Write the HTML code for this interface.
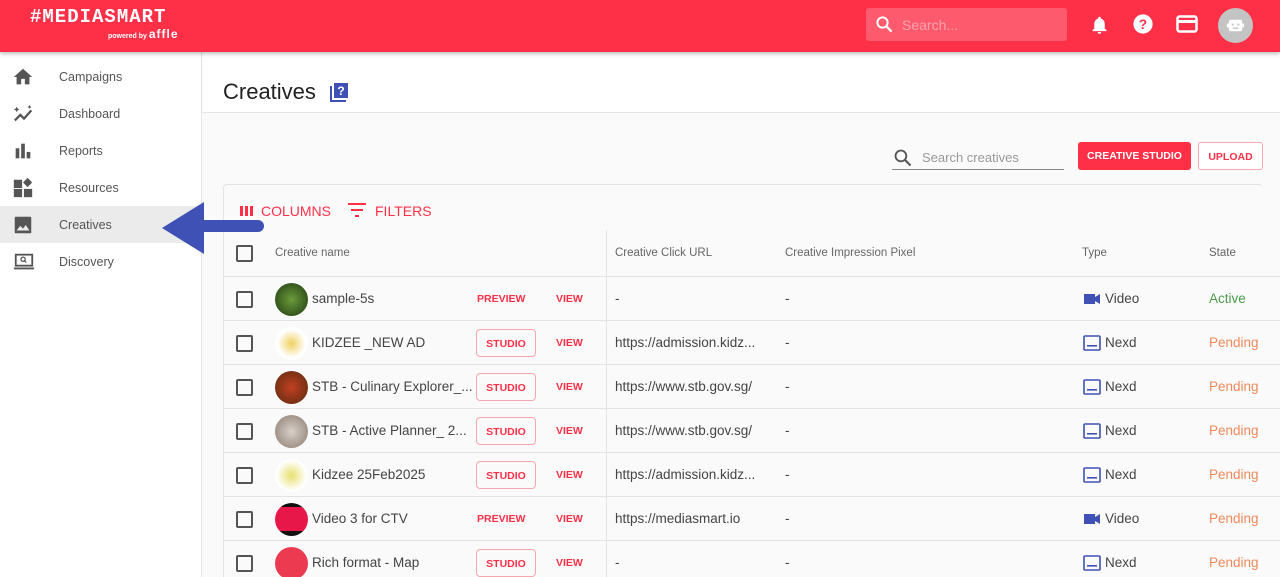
<!DOCTYPE html>
<html><head><style>
*{box-sizing:border-box;margin:0;padding:0}
html,body{width:1280px;height:577px;overflow:hidden}
body{font-family:"Liberation Sans",sans-serif;background:#fafafa;position:relative;color:#333}
.hdr{position:absolute;left:0;top:0;width:1280px;height:52px;background:#fe3048;box-shadow:0 2px 4px rgba(0,0,0,.25);z-index:5}
.logo{position:absolute;left:30px;top:6px;color:#fff;font-weight:bold;font-size:19px;letter-spacing:1px;font-family:"Liberation Mono",monospace}
.pw{position:absolute;left:108px;top:27px;color:#fff;font-size:7px;font-weight:bold}
.pw b{font-size:12px;letter-spacing:1px;font-weight:bold}
.srch{position:absolute;left:866px;top:8px;width:201px;height:33px;background:#fe5a6d;border-radius:3px;color:#ffa3ae;font-size:14px;padding:9px 0 0 36px}
.side{position:absolute;left:0;top:52px;width:202px;height:525px;background:#fff;border-right:1px solid #e3e3e3}
.item{position:absolute;left:0;width:202px;height:37px;font-size:12.5px;color:#555;padding:12px 0 0 59px}
.item svg{position:absolute;left:12px;top:8px}
.main{position:absolute;left:203px;top:52px;width:1077px;height:61px;background:#fff;border-bottom:1px solid #e3e3e3}
.card{position:absolute;left:223px;top:184px;width:1040px;height:400px;border:1px solid #e3e3e3;border-right:none;border-radius:4px;background:#fafafa}
.row{position:absolute;left:224px;width:1056px;height:44px;border-bottom:1px solid #e3e3e3;font-size:13.5px;color:#444}
.cb{position:absolute;left:12px;top:14px;width:17px;height:17px;border:2px solid #555;border-radius:2px}
.t{position:absolute;top:14px;white-space:nowrap}
.av{position:absolute;left:51px;top:6px;width:33px;height:33px;border-radius:50%}
.btn{position:absolute;top:8px;left:252px;width:60px;height:28px;border:1px solid #f7a6b0;border-radius:4px;color:#fe3048;font-size:10.5px;text-align:center;padding-top:8px;font-weight:bold}
.lk{position:absolute;top:16px;color:#fe3048;font-size:10.5px;font-weight:bold}
</style></head><body>
<div class="hdr">
<div class="logo">#MEDIASMART</div>
<div class="pw">powered by <b>affle</b></div>
<div class="srch">Search...<svg style="position:absolute;left:9px;top:7px" width="19" height="19" viewBox="0 0 24 24"><circle cx="9.5" cy="9.5" r="6.5" fill="none" stroke="#fff" stroke-width="2.5"/><path d="M14 14l7 7" stroke="#fff" stroke-width="2.8"/></svg></div>
<svg style="position:absolute;left:1089px;top:14px" width="21" height="22" viewBox="0 0 24 24"><path d="M12 22a2 2 0 002-2h-4a2 2 0 002 2zm6-6V11c0-3-1.6-5.6-4.5-6.3V4a1.5 1.5 0 00-3 0v.7C7.6 5.4 6 8 6 11v5l-2 2v1h16v-1z" fill="#fff"/></svg>
<svg style="position:absolute;left:1132px;top:13px" width="22" height="22" viewBox="0 0 24 24"><circle cx="12" cy="12" r="10.5" fill="#fff"/><text x="12" y="17.5" font-size="15" font-weight="bold" text-anchor="middle" fill="#fe3048" font-family="Liberation Sans">?</text></svg>
<svg style="position:absolute;left:1176px;top:14px" width="22" height="20" viewBox="0 0 22 20"><rect x="1.5" y="2.5" width="19" height="15" rx="2" fill="none" stroke="#fff" stroke-width="2.5"/><rect x="2" y="6" width="18" height="3" fill="#fff"/></svg>
<div style="position:absolute;left:1218px;top:8px;width:35px;height:35px;border-radius:50%;background:#c4c4c4"><svg style="position:absolute;left:8px;top:8px" width="19" height="19" viewBox="0 0 20 20"><rect x="3" y="4" width="14" height="12" rx="2" fill="#fff"/><rect x="1" y="8" width="2" height="4" fill="#fff"/><rect x="17" y="8" width="2" height="4" fill="#fff"/><rect x="6" y="8" width="2" height="2" fill="#c4c4c4"/><rect x="12" y="8" width="2" height="2" fill="#c4c4c4"/><rect x="7" y="12" width="6" height="1.5" fill="#c4c4c4"/></svg></div>
</div>
<div class="side">
<div class="item" style="top:6px"><svg width="22" height="22" viewBox="0 0 24 24"><path d="M10 20v-6h4v6h5v-8h3L12 3 2 12h3v8z" fill="#555"/></svg>Campaigns</div>
<div class="item" style="top:43px"><svg width="24" height="22" viewBox="0 0 24 24"><path d="M2 19l6-6 4 4 8-9" fill="none" stroke="#555" stroke-width="2.5"/><path d="M4 4l1 2 2 1-2 1-1 2-1-2-2-1 2-1zM18 2l.8 1.5 1.5.8-1.5.7L18 6.5l-.7-1.5-1.5-.7 1.5-.8z" fill="#555"/></svg>Dashboard</div>
<div class="item" style="top:80px"><svg width="22" height="22" viewBox="0 0 24 24"><rect x="4" y="9" width="4" height="11" fill="#555"/><rect x="10" y="4" width="4" height="16" fill="#555"/><rect x="16" y="13" width="4" height="7" fill="#555"/></svg>Reports</div>
<div class="item" style="top:117px"><svg width="22" height="22" viewBox="0 0 24 24"><rect x="2" y="3" width="9" height="9" fill="#555"/><rect x="2" y="13" width="9" height="9" fill="#555"/><rect x="13" y="13" width="9" height="9" fill="#555"/><path d="M17 1l5 5-5 5-5-5z" fill="#555"/></svg>Resources</div>
<div class="item" style="top:154px;background:#ebebeb"><svg width="22" height="22" viewBox="0 0 24 24"><rect x="3" y="3" width="18" height="18" rx="1" fill="#555"/><path d="M5 18l4-5 3 3 3-4 4 6z" fill="#ebebeb"/></svg>Creatives</div>
<div class="item" style="top:191px"><svg width="24" height="22" viewBox="0 0 24 24"><rect x="3" y="4" width="18" height="12" fill="none" stroke="#555" stroke-width="2"/><path d="M1 18h22v2H1z" fill="#555"/><circle cx="11" cy="9" r="2.3" fill="none" stroke="#555" stroke-width="1.4"/><path d="M12.5 10.5l2 2" stroke="#555" stroke-width="1.4"/></svg>Discovery</div>
</div>
<div class="main"><div style="position:absolute;left:20px;top:27px;font-size:22px;color:#222">Creatives</div>
<svg style="position:absolute;left:126px;top:30px" width="20" height="21" viewBox="0 0 20 21"><path d="M2 4v15h15" fill="none" stroke="#3f51b5" stroke-width="2"/><rect x="5" y="1" width="14" height="15" fill="#3f51b5"/><text x="12" y="13" font-size="12" font-weight="bold" fill="#fff" text-anchor="middle" font-family="Liberation Sans">?</text></svg></div>
<svg style="position:absolute;left:893px;top:148px" width="20" height="20" viewBox="0 0 24 24"><circle cx="9.5" cy="9.5" r="6.5" fill="none" stroke="#555" stroke-width="2.2"/><path d="M14 14l7 7" stroke="#555" stroke-width="2.5"/></svg>
<div style="position:absolute;left:922px;top:150px;font-size:13px;color:#999">Search creatives</div>
<div style="position:absolute;left:892px;top:169px;width:172px;height:1px;background:#888"></div>
<div style="position:absolute;left:1078px;top:142px;width:113px;height:28px;background:#fe3048;border-radius:3px;color:#fff;font-size:10.5px;font-weight:bold;text-align:center;padding-top:8px">CREATIVE STUDIO</div>
<div style="position:absolute;left:1198px;top:142px;width:65px;height:28px;border:1px solid #f7a6b0;border-radius:3px;color:#fe3048;font-size:10.5px;font-weight:bold;text-align:center;padding-top:8px;background:#fff">UPLOAD</div>
<div class="card"></div>
<svg style="position:absolute;left:240px;top:206px" width="13" height="10" viewBox="0 0 13 10"><rect x="0" y="0" width="3" height="10" fill="#fe3048"/><rect x="5" y="0" width="3" height="10" fill="#fe3048"/><rect x="10" y="0" width="3" height="10" fill="#fe3048"/></svg>
<div style="position:absolute;left:261px;top:203px;font-size:14px;color:#fe3048">COLUMNS</div>
<svg style="position:absolute;left:347px;top:202px" width="20" height="16" viewBox="0 0 20 16"><path d="M1 2h18M4 8h12M8 14h4" stroke="#fe3048" stroke-width="2"/></svg>
<div style="position:absolute;left:375px;top:203px;font-size:14px;color:#fe3048">FILTERS</div>
<div style="position:absolute;left:606px;top:230px;width:1px;height:347px;background:#e3e3e3"></div>
<div class="row" style="top:231px;height:46px;color:#666;font-size:11.5px"><div class="cb"></div><div class="t" style="left:51px;top:16px">Creative name</div><div class="t" style="left:391px;top:16px">Creative Click URL</div><div class="t" style="left:561px;top:16px">Creative Impression Pixel</div><div class="t" style="left:858px;top:16px">Type</div><div class="t" style="left:985px;top:16px">State</div></div>

<div class="row" style="top:277px"><div class="cb"></div><div class="av" style="background:radial-gradient(#6a9a3a,#1f3a12)"></div><div class="t" style="left:88px">sample-5s</div><div class="lk" style="left:253px">PREVIEW</div><div class="lk" style="left:332px">VIEW</div><div class="t" style="left:391px">-</div><div class="t" style="left:561px">-</div><svg style="position:absolute;left:860px;top:16px" width="16" height="12" viewBox="0 0 16 12"><rect x="0" y="1" width="11" height="10" fill="#3f51b5"/><path d="M11 4l5-3v10l-5-3z" fill="#3f51b5"/></svg><div class="t" style="left:881px">Video</div><div class="t" style="left:985px;color:#4c9a4c">Active</div></div>

<div class="row" style="top:321px"><div class="cb"></div><div class="av" style="background:radial-gradient(#f0d060,#fff 60%)"></div><div class="t" style="left:88px">KIDZEE _NEW AD</div><div class="btn">STUDIO</div><div class="lk" style="left:332px">VIEW</div><div class="t" style="left:391px">https://admission.kidz...</div><div class="t" style="left:561px">-</div><svg style="position:absolute;left:859px;top:14px" width="18" height="16" viewBox="0 0 18 16"><rect x="1" y="1" width="16" height="14" rx="1" fill="none" stroke="#3f51b5" stroke-width="1.6"/><rect x="4" y="10" width="10" height="1.6" fill="#3f51b5"/></svg><div class="t" style="left:881px">Nexd</div><div class="t" style="left:985px;color:#f0895a">Pending</div></div>

<div class="row" style="top:365px"><div class="cb"></div><div class="av" style="background:radial-gradient(#c04020,#5a2a10)"></div><div class="t" style="left:88px">STB - Culinary Explorer_...</div><div class="btn">STUDIO</div><div class="lk" style="left:332px">VIEW</div><div class="t" style="left:391px">https://www.stb.gov.sg/</div><div class="t" style="left:561px">-</div><svg style="position:absolute;left:859px;top:14px" width="18" height="16" viewBox="0 0 18 16"><rect x="1" y="1" width="16" height="14" rx="1" fill="none" stroke="#3f51b5" stroke-width="1.6"/><rect x="4" y="10" width="10" height="1.6" fill="#3f51b5"/></svg><div class="t" style="left:881px">Nexd</div><div class="t" style="left:985px;color:#f0895a">Pending</div></div>

<div class="row" style="top:409px"><div class="cb"></div><div class="av" style="background:radial-gradient(#d8d0c8,#8a7a70)"></div><div class="t" style="left:88px">STB - Active Planner_ 2...</div><div class="btn">STUDIO</div><div class="lk" style="left:332px">VIEW</div><div class="t" style="left:391px">https://www.stb.gov.sg/</div><div class="t" style="left:561px">-</div><svg style="position:absolute;left:859px;top:14px" width="18" height="16" viewBox="0 0 18 16"><rect x="1" y="1" width="16" height="14" rx="1" fill="none" stroke="#3f51b5" stroke-width="1.6"/><rect x="4" y="10" width="10" height="1.6" fill="#3f51b5"/></svg><div class="t" style="left:881px">Nexd</div><div class="t" style="left:985px;color:#f0895a">Pending</div></div>

<div class="row" style="top:453px"><div class="cb"></div><div class="av" style="background:radial-gradient(#e8e070,#fff 65%)"></div><div class="t" style="left:88px">Kidzee 25Feb2025</div><div class="btn">STUDIO</div><div class="lk" style="left:332px">VIEW</div><div class="t" style="left:391px">https://admission.kidz...</div><div class="t" style="left:561px">-</div><svg style="position:absolute;left:859px;top:14px" width="18" height="16" viewBox="0 0 18 16"><rect x="1" y="1" width="16" height="14" rx="1" fill="none" stroke="#3f51b5" stroke-width="1.6"/><rect x="4" y="10" width="10" height="1.6" fill="#3f51b5"/></svg><div class="t" style="left:881px">Nexd</div><div class="t" style="left:985px;color:#f0895a">Pending</div></div>

<div class="row" style="top:497px"><div class="cb"></div><div class="av" style="background:linear-gradient(#111 12%,#e8174a 12%,#e8174a 85%,#111 85%)"></div><div class="t" style="left:88px">Video 3 for CTV</div><div class="lk" style="left:253px">PREVIEW</div><div class="lk" style="left:332px">VIEW</div><div class="t" style="left:391px">https://mediasmart.io</div><div class="t" style="left:561px">-</div><svg style="position:absolute;left:860px;top:16px" width="16" height="12" viewBox="0 0 16 12"><rect x="0" y="1" width="11" height="10" fill="#3f51b5"/><path d="M11 4l5-3v10l-5-3z" fill="#3f51b5"/></svg><div class="t" style="left:881px">Video</div><div class="t" style="left:985px;color:#f0895a">Pending</div></div>

<div class="row" style="top:541px"><div class="cb"></div><div class="av" style="background:#ec3a50"></div><div class="t" style="left:88px">Rich format - Map</div><div class="btn">STUDIO</div><div class="lk" style="left:332px">VIEW</div><div class="t" style="left:391px">-</div><div class="t" style="left:561px">-</div><svg style="position:absolute;left:859px;top:14px" width="18" height="16" viewBox="0 0 18 16"><rect x="1" y="1" width="16" height="14" rx="1" fill="none" stroke="#3f51b5" stroke-width="1.6"/><rect x="4" y="10" width="10" height="1.6" fill="#3f51b5"/></svg><div class="t" style="left:881px">Nexd</div><div class="t" style="left:985px;color:#f0895a">Pending</div></div>

<svg style="position:absolute;left:160px;top:200px;z-index:6" width="104" height="56" viewBox="0 0 104 56"><path d="M2 28L44 2v18h54a6 6 0 010 12H44v22z" fill="#3f51b5"/></svg>
</body></html>
